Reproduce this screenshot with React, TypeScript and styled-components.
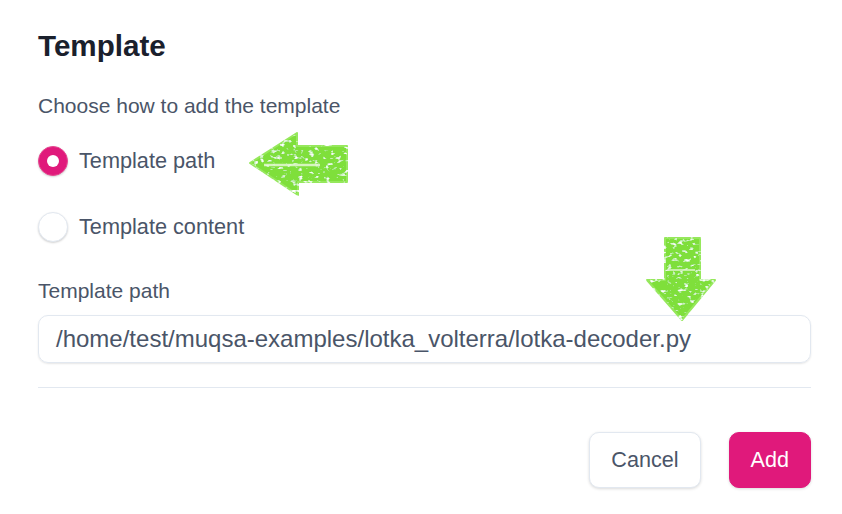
import styled, { createGlobalStyle } from 'styled-components';

const GlobalStyle = createGlobalStyle`
  html, body {
    margin: 0;
    padding: 0;
    background: #ffffff;
    font-family: "Liberation Sans", Arial, sans-serif;
  }
`;

const Dialog = styled.div`
  position: relative;
  width: 842px;
  height: 514px;
  box-sizing: border-box;
  padding: 30px 31px 0 38px;
  display: flex;
  flex-direction: column;
`;

const Title = styled.h2`
  margin: 0;
  font-size: 29.6px;
  font-weight: 700;
  color: #1a202c;
  line-height: 32px;
`;

const Hint = styled.p`
  margin: 33px 0 0;
  font-size: 21px;
  color: #4a5568;
  line-height: 22px;
`;

const RadioGroup = styled.div`
  display: flex;
  flex-direction: column;
  gap: 36px;
  margin-top: 29px;
`;

const RadioRow = styled.label`
  display: flex;
  align-items: center;
  gap: 11px;
  height: 30px;
  font-size: 21.7px;
  color: #4a5568;
  cursor: pointer;
`;

const RadioDot = styled.span<{ $checked?: boolean }>`
  width: 30px;
  height: 30px;
  flex: none;
  border-radius: 50%;
  box-sizing: border-box;
  display: flex;
  align-items: center;
  justify-content: center;
  background: ${(p) => (p.$checked ? '#e0197b' : '#ffffff')};
  border: 1px solid ${(p) => (p.$checked ? '#e6478f' : '#e2e8f0')};
  box-shadow: 0 1px 2px rgba(0, 0, 0, 0.18);

  &::after {
    content: '';
    display: ${(p) => (p.$checked ? 'block' : 'none')};
    width: 12px;
    height: 12px;
    border-radius: 50%;
    background: #ffffff;
  }
`;

const FieldLabel = styled.div`
  margin-top: 37px;
  font-size: 21px;
  color: #4a5568;
  line-height: 24px;
`;

const PathInput = styled.div`
  margin-top: 12px;
  height: 48px;
  box-sizing: border-box;
  border: 1px solid #e2e8f0;
  border-radius: 10px;
  box-shadow: 0 1px 2px rgba(0, 0, 0, 0.1);
  padding: 0 17px;
  display: flex;
  align-items: center;
  font-size: 24px;
  color: #4a5568;
  white-space: nowrap;
`;

const Divider = styled.hr`
  margin: 24px 0 0;
  border: none;
  border-top: 1px solid #e2e8f0;
`;

const Footer = styled.div`
  display: flex;
  justify-content: flex-end;
  gap: 28px;
  margin-top: 44px;
`;

const Button = styled.button<{ $primary?: boolean }>`
  height: 56px;
  padding: 0 21px;
  border-radius: 10px;
  font-family: inherit;
  font-size: 21.6px;
  cursor: pointer;
  border: 1px solid ${(p) => (p.$primary ? '#e0197b' : '#e2e8f0')};
  background: ${(p) => (p.$primary ? '#e0197b' : '#ffffff')};
  color: ${(p) => (p.$primary ? '#ffffff' : '#4a5568')};
  box-shadow: 0 1px 3px rgba(0, 0, 0, 0.15);
`;

const Annotation = styled.svg<{ $x: number; $y: number }>`
  position: absolute;
  left: ${(p) => p.$x}px;
  top: ${(p) => p.$y}px;
  pointer-events: none;
  overflow: visible;
`;

const ChalkFilter = ({ id, seed }: { id: string; seed: number }) => (
  <defs>
    <filter id={id} x="-10%" y="-10%" width="120%" height="120%">
      <feTurbulence type="fractalNoise" baseFrequency="0.18 0.3" numOctaves={2} seed={seed} result="noise" />
      <feColorMatrix
        in="noise"
        type="matrix"
        values="0 0 0 0 1  0 0 0 0 1  0 0 0 0 1  5 0 0 0 -2.9"
        result="speck"
      />
      <feComposite in="speck" in2="SourceGraphic" operator="in" result="speckIn" />
      <feMerge>
        <feMergeNode in="SourceGraphic" />
        <feMergeNode in="speckIn" />
      </feMerge>
    </filter>
  </defs>
);

const LeftArrow = () => (
  <Annotation $x={248} $y={130} width={102} height={68} viewBox="0 0 102 68">
    <ChalkFilter id="chalk-left" seed={4} />
    <path
      d="M2 33 L49 3 L49 16 L99 16 L99 52 L50 52 L50 65 Z"
      fill="#7fdf3a"
      stroke="#96e85c"
      strokeWidth={2}
      strokeLinejoin="round"
      filter="url(#chalk-left)"
    />
    <path d="M16 35 L72 35" stroke="#e4f9d4" strokeWidth={2.5} opacity={0.85} />
  </Annotation>
);

const DownArrow = () => (
  <Annotation $x={645} $y={236} width={74} height={88} viewBox="0 0 74 88">
    <ChalkFilter id="chalk-down" seed={9} />
    <path
      d="M20 2 L55 2 L55 44 L70 44 L37 84 L2 44 L20 44 Z"
      fill="#7fdf3a"
      stroke="#96e85c"
      strokeWidth={2}
      strokeLinejoin="round"
      filter="url(#chalk-down)"
    />
    <path d="M24 34 L50 34" stroke="#d8f5c2" strokeWidth={2} opacity={0.8} />
  </Annotation>
);

export default function App() {
  return (
    <>
      <GlobalStyle />
      <Dialog>
        <Title>Template</Title>
        <Hint>Choose how to add the template</Hint>
        <RadioGroup>
          <RadioRow>
            <RadioDot $checked />
            Template path
          </RadioRow>
          <RadioRow>
            <RadioDot />
            Template content
          </RadioRow>
        </RadioGroup>
        <FieldLabel>Template path</FieldLabel>
        <PathInput>/home/test/muqsa-examples/lotka_volterra/lotka-decoder.py</PathInput>
        <Divider />
        <Footer>
          <Button>Cancel</Button>
          <Button $primary>Add</Button>
        </Footer>
        <LeftArrow />
        <DownArrow />
      </Dialog>
    </>
  );
}
